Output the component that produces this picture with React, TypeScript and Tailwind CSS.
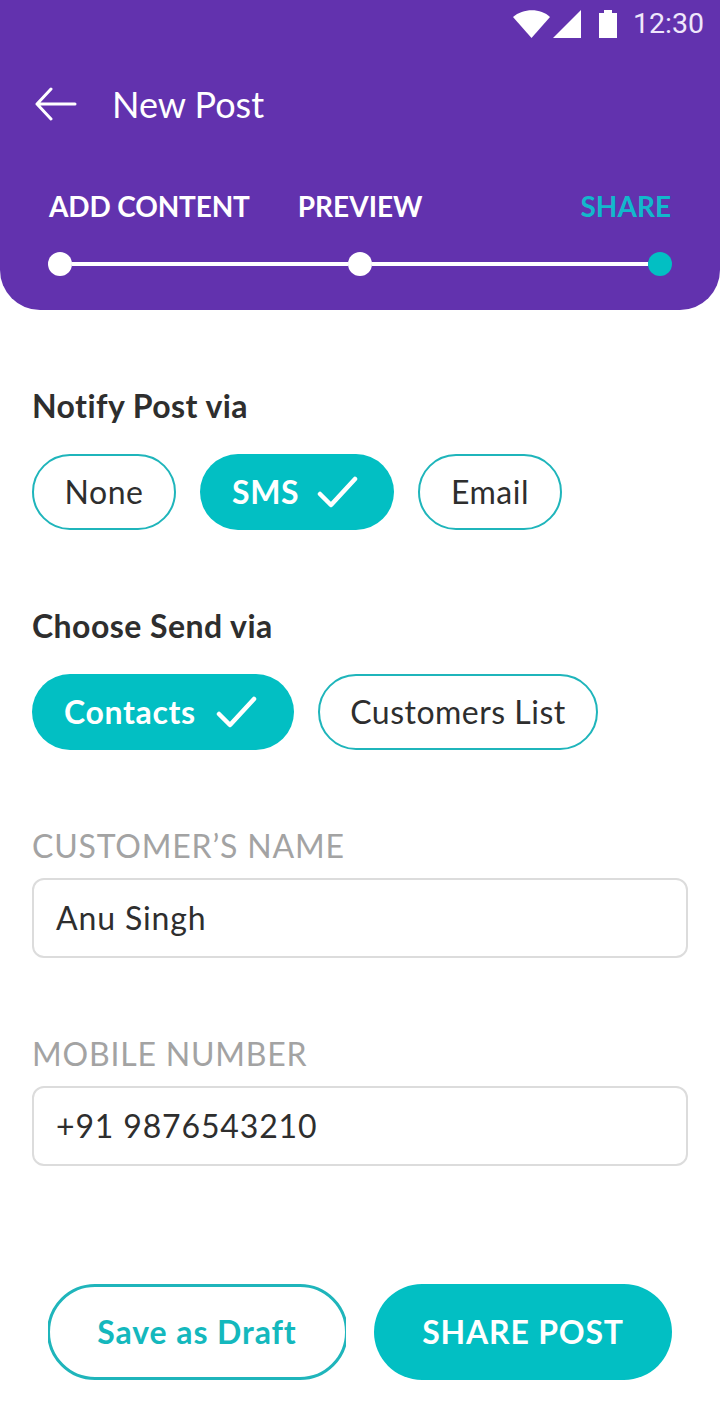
import type { ReactNode } from 'react';

function Check() {
  return (
    <svg width="42" height="34" viewBox="0 0 42 34" fill="none" className="block">
      <path d="M3 19 L14 30 L38 4" stroke="#fff" strokeWidth="4.5" strokeLinecap="round" strokeLinejoin="round" />
    </svg>
  );
}

function Chip({ label, active, wClass, gapClass }: { label: string; active?: boolean; wClass: string; gapClass?: string }) {
  if (active) {
    return (
      <div className={`h-[76px] rounded-full bg-[#02bfc3] flex items-center pl-8 text-white font-bold text-[32px] tracking-[0.65px] ${gapClass} ${wClass}`}>
        <span>{label}</span>
        <Check />
      </div>
    );
  }
  return (
    <div className={`h-[76px] rounded-full border-2 border-[#1fb5bb] flex items-center justify-center text-[#2e2e2e] text-[32px] tracking-[0.5px] ${wClass}`}>
      {label}
    </div>
  );
}

function Field({ label, value }: { label: string; value: string }) {
  return (
    <div>
      <div className="text-[32px] leading-[40px] text-[#a3a3a3] tracking-[0.8px]">{label}</div>
      <div className="mt-[12px] h-[80px] rounded-[12px] border-2 border-[#dcdcdc] flex items-center pl-[22px] text-[32px] text-[#2e2e2e] tracking-[0.85px]">
        {value}
      </div>
    </div>
  );
}

function Heading({ children }: { children: ReactNode }) {
  return <div className="text-[32px] leading-[40px] font-bold text-[#2e2e2e] tracking-[0.45px]">{children}</div>;
}

export default function App() {
  return (
    <div className="w-[720px] h-[1420px] bg-white overflow-hidden font-['Lato','Noto_Sans',sans-serif]">
      {/* Header */}
      <div className="h-[310px] bg-[#6232ae] rounded-b-[40px] flex flex-col">
        <div className="h-[48px] flex items-center justify-end pr-4 gap-[15px]">
          <div className="flex items-center">
            <svg width="38" height="28" viewBox="0 0 38 28" className="block">
              <path d="M0 7 C10 -2 28 -2 37 7 L18.5 28 Z" fill="#fff" />
            </svg>
            <svg width="29" height="28" viewBox="0 0 29 28" className="block ml-[2px]">
              <path d="M0 28 L28 0 L28 28 Z" fill="#fff" />
            </svg>
            <svg width="19" height="28" viewBox="0 0 19 28" className="block ml-[17px]">
              <path d="M0 3 H5 V0 H13 V3 H18 V28 H0 Z" fill="#fff" />
            </svg>
          </div>
          <span className="font-['Roboto',sans-serif] text-[28.5px] leading-none text-[#efe6fb]">12:30</span>
        </div>

        <div className="mt-[22px] h-[70px] flex items-center pl-[35px]">
          <svg width="42" height="34" viewBox="0 0 42 34" fill="none" className="block mb-[2px]">
            <path d="M40 17 H2 M16 2 L2 17 L16 32" stroke="#fff" strokeWidth="3" strokeLinecap="round" strokeLinejoin="round" />
          </svg>
          <span className="ml-[35px] mb-[2px] text-[36px] text-white">New Post</span>
        </div>

        <div className="mt-[46px] flex items-center px-[49px] text-[28px] font-bold leading-[40px] text-white">
          <span className="tracking-[-0.15px]">ADD CONTENT</span>
          <span className="ml-[48px]">PREVIEW</span>
          <span className="ml-auto text-[#12b8cc]">SHARE</span>
        </div>

        {/* Stepper */}
        <div className="mt-[26px] mx-[48px] flex items-center">
          <div className="w-6 h-6 rounded-full bg-white shrink-0" />
          <div className="flex-1 h-1 bg-white" />
          <div className="w-6 h-6 rounded-full bg-white shrink-0" />
          <div className="flex-1 h-1 bg-white" />
          <div className="w-6 h-6 rounded-full bg-[#02bfc3] shrink-0" />
        </div>
      </div>

      {/* Form */}
      <div className="px-8 pt-[76px]">
        <Heading>Notify Post via</Heading>
        <div className="mt-[28px] flex gap-6">
          <Chip label="None" wClass="w-[144px]" />
          <Chip label="SMS" active wClass="w-[194px]" gapClass="gap-[18px]" />
          <Chip label="Email" wClass="w-[144px]" />
        </div>

        <div className="mt-[76px]">
          <Heading>Choose Send via</Heading>
        </div>
        <div className="mt-[28px] flex gap-6">
          <Chip label="Contacts" active wClass="w-[262px]" gapClass="gap-[20px]" />
          <Chip label="Customers List" wClass="w-[280px]" />
        </div>

        <div className="mt-[76px]">
          <Field label="CUSTOMER’S NAME" value="Anu Singh" />
        </div>
        <div className="mt-[76px]">
          <Field label="MOBILE NUMBER" value="+91 9876543210" />
        </div>
      </div>

      {/* Actions */}
      <div className="mt-[118px] flex pl-[48px] gap-[28px]">
        {/* the reference's outline is cut off at its left and right edges */}
        <div className="w-[298px] h-[96px] overflow-hidden flex justify-center">
          <div className="w-[301px] h-[96px] shrink-0 rounded-full border-[3px] border-[#1fb5bb] flex items-center justify-center text-[#14b8bd] text-[32px] font-bold tracking-[0.9px]">
            Save as Draft
          </div>
        </div>
        <div className="w-[298px] h-[96px] rounded-full bg-[#02bfc3] flex items-center justify-center text-white text-[32px] font-bold tracking-[0.8px]">
          SHARE POST
        </div>
      </div>
    </div>
  );
}
